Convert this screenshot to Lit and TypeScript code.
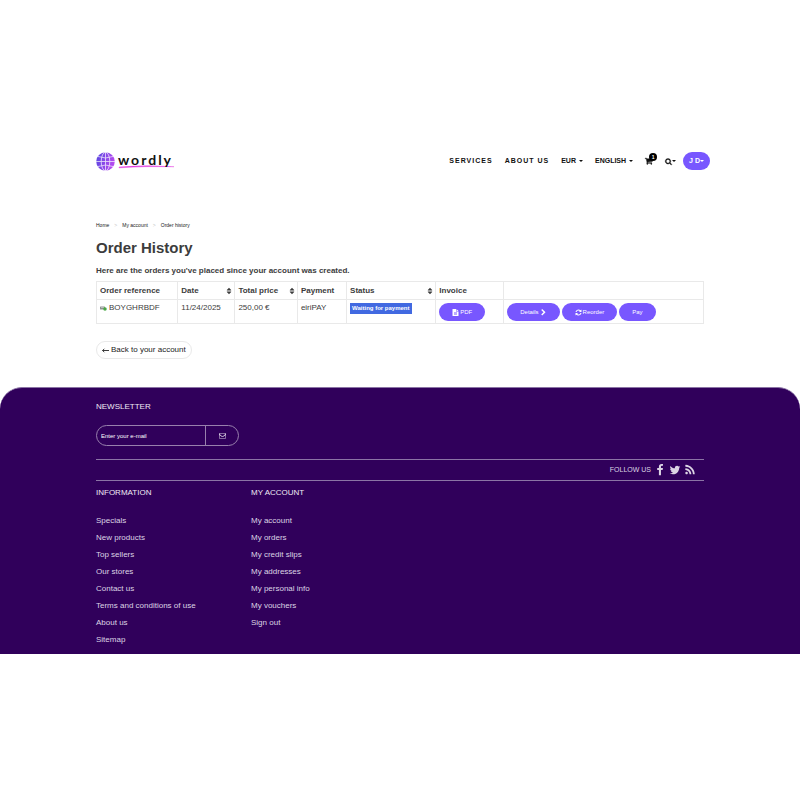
import { LitElement, html, css, svg } from "lit";
import { customElement } from "lit/decorators.js";

const icons = {
  cart: svg`<path d="M640 1536q0 52-38 90t-90 38-90-38-38-90 38-90 90-38 90 38 38 90zm896 0q0 52-38 90t-90 38-90-38-38-90 38-90 90-38 90 38 38 90zm128-1088v512q0 24-16.500 42.500t-40.500 21.500l-1044 122q13 60 13 70 0 16-24 64h920q26 0 45 19t19 45-19 45-45 19h-1024q-26 0-45-19t-19-45q0-11 8-31.500t16-36 21.500-40 15.500-29.500l-177-823h-204q-26 0-45-19t-19-45 19-45 45-19h256q16 0 28.500 6.500t19.500 15.500 13 24.500 8 26 5.500 29.500 4.500 26h1201q26 0 45 19t19 45z" stroke="currentColor" stroke-width="90"/>`,
  search: svg`<path d="M1216 832q0-185-131.500-316.500t-316.500-131.500-316.500 131.500-131.500 316.500 131.500 316.500 316.500 131.500 316.500-131.500 131.500-316.500zm512 832q0 52-38 90t-90 38q-54 0-90-38l-343-342q-179 124-399 124-143 0-273.500-55.500t-225-150-150-225-55.500-273.500 55.500-273.500 150-225 225-150 273.500-55.500 273.500 55.500 225 150 150 225 55.500 273.500q0 220-124 399l343 343q37 37 37 90z" stroke="currentColor" stroke-width="90"/>`,
  file: svg`<path d="M1152 512v-472q22 14 36 28l408 408q14 14 28 36h-472zm-128 32q0 40 28 68t68 28h544v1056q0 40-28 68t-68 28h-1344q-40 0-68-28t-28-68v-1600q0-40 28-68t68-28h800v544zM512 896v96h768v-96zm0 256v96h768v-96zm0 256v96h768v-96z" fill-rule="evenodd"/>`,
  chevron: svg`<path d="M1363 877l-742 742q-19 19-45 19t-45-19l-166-166q-19-19-19-45t19-45l531-531-531-531q-19-19-19-45t19-45l166-166q19-19 45-19t45 19l742 742q19 19 19 45t-19 45z"/>`,
  refresh: svg`<path d="M1639 1056q0 5-1 7-64 268-268 434.500t-478 166.500q-146 0-282.500-55t-243.500-157l-129 129q-19 19-45 19t-45-19-19-45v-448q0-26 19-45t45-19h448q26 0 45 19t19 45-19 45l-137 137q71 66 161 102t187 36q134 0 250-65t186-179q11-17 53-117 8-23 30-23h192q13 0 22.500 9.500t9.500 22.500zm25-800v448q0 26-19 45t-45 19h-448q-26 0-45-19t-19-45 19-45l138-138q-148-137-349-137-134 0-250 65t-186 179q-11 17-53 117-8 23-30 23h-199q-13 0-22.500-9.500t-9.500-22.500v-7q65-268 270-434.500t480-166.500q146 0 284 55.500t245 156.500l130-129q19-19 45-19t45 19 19 45z"/>`,
  sort: svg`<path d="M1408 1088q0 26-19 45l-448 448q-19 19-45 19t-45-19l-448-448q-19-19-19-45t19-45 45-19h896q26 0 45 19t19 45zm0-384q0 26-19 45t-45 19h-896q-26 0-45-19t-19-45 19-45l448-448q19-19 45-19t45 19l448 448q19 19 19 45z"/>`,
  mail: svg`<path d="M1664 1504v-768q-32 36-69 66-268 206-426 338-51 43-83 67t-86.500 48.500-102.500 24.500h-2q-48 0-102.500-24.500t-86.500-48.500-83-67q-158-132-426-338-37-30-69-66v768q0 13 9.500 22.500t22.500 9.500h1472q13 0 22.500-9.500t9.500-22.500zm0-1120H128q0 168 147 284 193 152 401 317 6 5 35 29.500t46 37.500 44.500 31.500 50.500 27.500 43 9h2q20 0 43-9t50.500-27.500 44.500-31.500 46-37.500 35-29.500q208-165 401-317 147-116 147-284zm128-32v1152q0 66-47 113t-113 47h-1472q-66 0-113-47t-47-113v-1088q0-66 47-113t113-47h1472q66 0 113 47t47 113z"/>`,
  facebook: svg`<path d="M1343 12v264h-157q-86 0-116 36t-30 108v189h293l-39 296h-254v759h-306v-759h-255v-296h255v-218q0-186 104-288.500t277-102.500q147 0 228 12z"/>`,
  twitter: svg`<path d="M1684 408q-67 98-162 167 1 14 1 42 0 130-38 259.500t-115.500 248.500-184.500 210.500-258 146-323 54.500q-271 0-496-145 35 4 78 4 225 0 401-138-105-2-188-64.500t-114-159.500q33 5 61 5 43 0 85-11-112-23-185.500-111.500t-73.500-205.500v-4q68 38 146 41-66-44-105-115t-39-154q0-88 44-163 121 149 294.500 238.500t371.500 99.500q-8-38-8-74 0-134 94.500-228.500t228.500-94.500q140 0 236 102 109-21 205-78-37 115-142 178 93-10 186-50z"/>`,
  rss: svg`<path d="M576 1344q0 80-56 136t-136 56-136-56-56-136 56-136 136-56 136 56 56 136zm512 123q2 28-17 48-18 21-47 21h-135q-25 0-43-16.500t-20-41.500q-22-229-184.500-391.500t-391.500-184.500q-25-2-41.500-20t-16.500-43v-135q0-29 21-47 17-17 43-17h5q160 13 306 80.500t259 181.500q114 113 181.500 259t80.500 306zm512 2q2 27-18 47-18 20-46 20h-143q-26 0-44.500-17.500t-19.500-42.500q-12-215-101-408.500t-231.500-336-336-231.500-408.500-102q-25-1-42.500-19.500t-17.500-43.500v-143q0-28 20-46 18-18 44-18h3q262 13 501.500 120t425.500 294q187 186 294 425.500t120 501.500z"/>`,
};

const icon = (name: keyof typeof icons, cls = "") =>
  html`<svg class="icon ${cls}" viewBox="0 0 1792 1792" aria-hidden="true">${icons[name]}</svg>`;

const information = [
  "Specials",
  "New products",
  "Top sellers",
  "Our stores",
  "Contact us",
  "Terms and conditions of use",
  "About us",
  "Sitemap",
];
const account = [
  "My account",
  "My orders",
  "My credit slips",
  "My addresses",
  "My personal info",
  "My vouchers",
  "Sign out",
];

@customElement("app-root")
export class AppRoot extends LitElement {
  static styles = css`
    :host {
      display: block;
      min-height: 100vh;
      background: #fff;
      color: #3c3c3c;
      font-family: "Liberation Sans", Arial, sans-serif;
      font-size: 8px;
      line-height: 10px;
    }
    * {
      box-sizing: border-box;
    }
    a {
      color: inherit;
      text-decoration: none;
    }
    button {
      font: inherit;
      color: inherit;
      background: none;
      border: 0;
      padding: 0;
      cursor: pointer;
    }
    .icon {
      width: 8px;
      height: 8px;
      fill: currentColor;
      flex: none;
      overflow: visible;
    }
    .icon.small {
      width: 7px;
      height: 7px;
    }
    .icon.large {
      width: 12px;
      height: 12px;
    }
    .wrap {
      width: 76%;
      margin: 0 auto;
    }
    .page {
      padding-top: 150px;
    }
    .header {
      display: flex;
      align-items: center;
      justify-content: space-between;
      height: 22px;
      padding: 0 calc(12% - 6px) 0 12%;
    }
    .logo {
      display: block;
      height: 22px;
    }
    .logo svg {
      display: block;
      width: 80px;
      height: 22px;
    }
    .logo text {
      font: 700 14px Lato, sans-serif;
      letter-spacing: 2px;
    }
    .nav {
      display: flex;
      align-items: center;
      gap: 12px;
      color: #111;
      font-size: 7px;
      font-weight: 700;
    }
    .main-links {
      display: flex;
      gap: 12px;
      letter-spacing: 1px;
    }
    .drop {
      display: flex;
      align-items: center;
      gap: 3px;
      font-weight: 700;
    }
    .drop::after {
      content: "";
      border: 2px solid transparent;
      border-top-color: currentColor;
      border-bottom: 0;
    }
    .tools {
      display: flex;
      align-items: center;
      gap: 7px;
    }
    .cart {
      position: relative;
      display: flex;
      margin-right: 5px;
    }
    .count {
      position: absolute;
      left: 4px;
      top: -4px;
      width: 8px;
      height: 8px;
      border-radius: 50%;
      background: #000;
      color: #fff;
      font-size: 5px;
      line-height: 8px;
      text-align: center;
    }
    .search {
      gap: 0;
    }
    .user {
      gap: 0;
      height: 18px;
      padding: 0 6px;
      border-radius: 9px;
      background: #7857ff;
      color: #fff;
    }
    .crumbs {
      display: flex;
      gap: 5px;
      margin: 48px 0 0;
      padding: 0;
      list-style: none;
      font-size: 5px;
      color: #222;
    }
    .crumbs li + li::before {
      content: ">";
      color: #c4c4c4;
      margin-right: 5px;
    }
    h1 {
      margin: 8px 0 0;
      font-size: 15px;
      line-height: 20px;
    }
    .intro {
      margin: 8px 0 5px;
      font-weight: 700;
    }
    table {
      width: 100%;
      table-layout: fixed;
      border-collapse: collapse;
    }
    th,
    td {
      border: 1px solid #e9e9e9;
      padding: 3px;
      text-align: left;
      vertical-align: top;
    }
    th {
      height: 18px;
      padding-right: 1px;
      vertical-align: middle;
    }
    td {
      height: 24px;
      padding-bottom: 2px;
    }
    .c-ref {
      width: 13.4%;
    }
    .c-date {
      width: 9.4%;
    }
    .c-total {
      width: 10.3%;
    }
    .c-pay {
      width: 8.1%;
    }
    .c-status {
      width: 14.7%;
    }
    .c-inv {
      width: 11.2%;
    }
    .sortable {
      display: flex;
      width: 100%;
      align-items: center;
      justify-content: space-between;
      font-weight: 700;
    }
    .ref {
      display: flex;
      align-items: center;
      gap: 2px;
    }
    .ref svg {
      width: 7px;
      height: 6px;
    }
    .status {
      display: block;
      width: fit-content;
      background: #4169e1;
      color: #fff;
      font-size: 6px;
      font-weight: 700;
      line-height: 11px;
      padding: 0 2px;
    }
    .actions {
      display: flex;
      gap: 2px;
    }
    .pill {
      display: flex;
      align-items: center;
      justify-content: center;
      gap: 1px;
      height: 18px;
      padding: 0 13px;
      border-radius: 9px;
      background: #7857ff;
      color: #fff;
      font-size: 6px;
    }
    .back {
      display: inline-flex;
      align-items: center;
      gap: 2px;
      height: 18px;
      margin-top: 17px;
      padding: 0 5px;
      border: 1px solid #e9e9e9;
      border-radius: 9px;
      color: #222;
    }
    .back svg {
      width: 7px;
      height: 7px;
    }
    .footer {
      margin-top: 28px;
      padding: 14px 0 6px;
      border-top: 1px solid #8b74a5;
      border-radius: 22px 22px 0 0;
      background: #30005b;
      color: #dcd4e4;
    }
    h2 {
      margin: 0;
      font-size: 8px;
      font-weight: 400;
      line-height: 10px;
      color: #efeaf4;
    }
    .newsletter {
      display: flex;
      width: 143px;
      height: 21px;
      margin: 13px 0 13px;
      border: 1px solid #9880ad;
      border-radius: 11px;
      overflow: hidden;
    }
    .newsletter input {
      flex: 1;
      min-width: 0;
      border: 0;
      padding: 0 4px;
      background: none;
      color: #fff;
      font: inherit;
      font-size: 6px;
    }
    .newsletter input::placeholder {
      color: #fff;
      opacity: 1;
    }
    .newsletter button {
      display: flex;
      align-items: center;
      justify-content: center;
      width: 33px;
      border-left: 1px solid #9880ad;
    }
    .follow {
      display: flex;
      align-items: center;
      justify-content: flex-end;
      gap: 3px;
      height: 22px;
      padding-right: 8px;
      border-top: 1px solid #8b74a5;
      border-bottom: 1px solid #8b74a5;
      font-size: 7px;
    }
    .follow a {
      display: flex;
    }
    .columns {
      display: grid;
      grid-template-columns: repeat(4, 1fr);
      column-gap: 12px;
      padding-top: 7px;
    }
    .columns ul {
      margin: 14px 0 0;
      padding: 0;
      list-style: none;
      line-height: 17px;
    }
  `;

  private sortHead(label: string) {
    return html`<button class="sortable">${label}${icon("sort")}</button>`;
  }

  private links(title: string, items: string[]) {
    return html`<section>
      <h2>${title}</h2>
      <ul>
        ${items.map((t) => html`<li><a href="#">${t}</a></li>`)}
      </ul>
    </section>`;
  }

  render() {
    return html`
      <div class="page">
        <header class="header">
          <a class="logo" href="#" aria-label="wordly">
            <svg viewBox="0 0 80 22">
              <defs>
                <linearGradient id="globe" x1="0" y1="0" x2="1" y2="0.3">
                  <stop offset="0" stop-color="#5546e0" />
                  <stop offset="1" stop-color="#b44af0" />
                </linearGradient>
              </defs>
              <circle cx="9.500" cy="11.500" r="9.300" fill="url(#globe)" />
              <g fill="none" stroke="#fff" stroke-width="0.8" opacity="0.85">
                <ellipse cx="9.500" cy="11.500" rx="4.300" ry="9.300" />
                <path d="M9.500 2v19M0 11.500h19M2 6.500q7.500 3 15 0M2 16.500q7.500-3 15 0" />
              </g>
              <path d="M23 17Q50 14.500 78 16.700Q50 16 23 17.800z" fill="#e23be0" stroke="#e23be0" stroke-width="0.4" />
              <text x="22" y="15" fill="#111">wordly</text>
            </svg>
          </a>
          <nav class="nav">
            <div class="main-links"><a href="#">SERVICES</a><a href="#">ABOUT US</a></div>
            <button class="drop">EUR</button>
            <button class="drop">ENGLISH</button>
            <div class="tools">
              <a class="cart" href="#" aria-label="Cart">${icon("cart")}<span class="count">1</span></a>
              <button class="drop search" aria-label="Search">${icon("search", "small")}</button>
              <button class="drop user">J D</button>
            </div>
          </nav>
        </header>

        <main class="wrap">
          <ol class="crumbs">
            <li><a href="#">Home</a></li>
            <li><a href="#">My account</a></li>
            <li>Order history</li>
          </ol>
          <h1>Order History</h1>
          <p class="intro">Here are the orders you've placed since your account was created.</p>
          <table>
            <thead>
              <tr>
                <th class="c-ref">Order reference</th>
                <th class="c-date">${this.sortHead("Date")}</th>
                <th class="c-total">${this.sortHead("Total price")}</th>
                <th class="c-pay">Payment</th>
                <th class="c-status">${this.sortHead("Status")}</th>
                <th class="c-inv">Invoice</th>
                <th></th>
              </tr>
            </thead>
            <tbody>
              <tr>
                <td>
                  <a class="ref" href="#">
                    <svg viewBox="0 0 14 12" aria-hidden="true">
                      <rect x="0" y="3" width="10" height="6" rx="1" fill="#8d9290" />
                      <path d="M2 5h6" stroke="#e8e8e8" />
                      <circle cx="10" cy="8" r="3.500" fill="#49a844" />
                    </svg>
                    BOYGHRBDF
                  </a>
                </td>
                <td>11/24/2025</td>
                <td>250,00 €</td>
                <td>eiriPAY</td>
                <td><span class="status">Waiting for payment</span></td>
                <td>
                  <div class="actions"><a class="pill" href="#">${icon("file", "small")}PDF</a></div>
                </td>
                <td>
                  <div class="actions">
                    <a class="pill" href="#">Details${icon("chevron", "small")}</a>
                    <a class="pill" href="#">${icon("refresh", "small")}Reorder</a>
                    <a class="pill" href="#">Pay</a>
                  </div>
                </td>
              </tr>
            </tbody>
          </table>
          <a class="back" href="#">
            <svg viewBox="0 0 12 12" fill="none" stroke="currentColor" stroke-width="1.500" aria-hidden="true">
              <path d="M12 6H1M4 3L1 6l3 3" />
            </svg>
            Back to your account
          </a>
        </main>

        <footer class="footer">
          <div class="wrap">
            <h2>NEWSLETTER</h2>
            <form class="newsletter">
              <input type="email" placeholder="Enter your e-mail" aria-label="Enter your e-mail" />
              <button type="button" aria-label="Subscribe">${icon("mail", "small")}</button>
            </form>
            <div class="follow">
              <span>FOLLOW US</span>
              <a href="#" aria-label="Facebook">${icon("facebook", "large")}</a>
              <a href="#" aria-label="Twitter">${icon("twitter", "large")}</a>
              <a href="#" aria-label="RSS">${icon("rss", "large")}</a>
            </div>
            <div class="columns">
              ${this.links("INFORMATION", information)} ${this.links("MY ACCOUNT", account)}
            </div>
          </div>
        </footer>
      </div>
    `;
  }
}
